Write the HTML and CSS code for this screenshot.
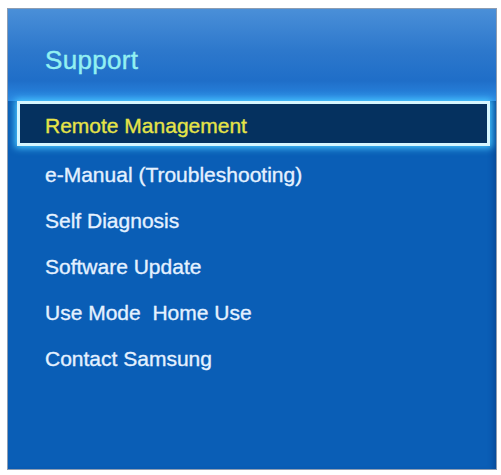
FILE: index.html
```html
<!DOCTYPE html>
<html lang="en">
<head>
    <meta charset="UTF-8">
    <meta name="viewport" content="width=device-width, initial-scale=1.0">
    <title>Support</title>
    <link rel="stylesheet" href="styles.css">
</head>
<body>
    <div class="panel">
        <div class="panel-header">
            <h1 class="panel-title">Support</h1>
        </div>

        <ul class="menu">
            <li class="menu-item selected">Remote Management</li>
            <li class="menu-item">e-Manual (Troubleshooting)</li>
            <li class="menu-item">Self Diagnosis</li>
            <li class="menu-item">Software Update</li>
            <li class="menu-item">Use Mode&nbsp;&nbsp;Home Use</li>
            <li class="menu-item">Contact Samsung</li>
        </ul>
    </div>
</body>
</html>
```

FILE: styles.css
```css
:root {
    --panel-blue: #0a5eb6;
    --title-color: #92f0f2;
    --item-color: #e4f1ff;
    --selected-text: #e6e448;
    --selected-bg: #05315f;
}

body {
    margin: 0;
    background: #ffffff;
    font-family: "Liberation Sans", Arial, sans-serif;
}

.panel {
    margin: 8px 0 0 7px;
    width: 488px;
    height: 460px;
    border: 1px solid #8d9db2;
    background: var(--panel-blue);
    overflow: hidden;
    box-shadow: inset -6px 0 6px -4px rgba(0, 30, 80, 0.35);
}

.panel-header {
    height: 92px;
    box-sizing: border-box;
    padding: 36px 0 0 37px;
    background: linear-gradient(180deg, #4a8fd8 0%, #2d78cc 45%, #1f6ec8 78%, #2b8ae4 100%);
}

.panel-title {
    margin: 0;
    font-size: 26px;
    line-height: 30px;
    font-weight: normal;
    letter-spacing: 0.3px;
    color: var(--title-color);
    -webkit-text-stroke: 0.4px var(--title-color);
}

.menu {
    list-style: none;
    margin: 0;
    padding: 0;
}

.menu-item {
    height: 46px;
    line-height: 46px;
    padding-left: 37px;
    font-size: 21px;
    color: var(--item-color);
    -webkit-text-stroke: 0.35px var(--item-color);
    white-space: nowrap;
}

.menu-item.selected {
    margin: 0 6px 6px 9px;
    height: 37px;
    line-height: 39px;
    padding: 2px 0 0 25px;
    background: var(--selected-bg);
    border: 3px solid #d6f6ff;
    box-shadow: 0 0 7px 2px #49c8ff;
    color: var(--selected-text);
    -webkit-text-stroke: 0.35px var(--selected-text);
}
```
